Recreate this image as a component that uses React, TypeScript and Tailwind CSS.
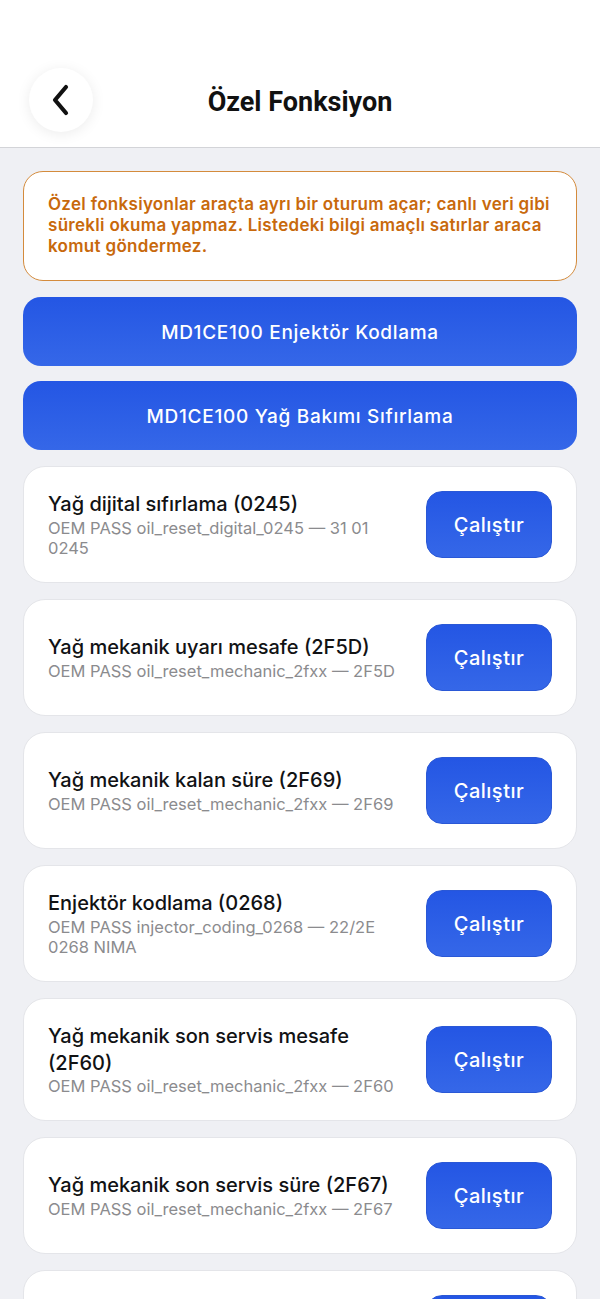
import React from "react";

type Item = { title: string; sub: string };

const items: Item[] = [
  { title: "Yağ dijital sıfırlama (0245)", sub: "OEM PASS oil_reset_digital_0245 — 31 01 0245" },
  { title: "Yağ mekanik uyarı mesafe (2F5D)", sub: "OEM PASS oil_reset_mechanic_2fxx — 2F5D" },
  { title: "Yağ mekanik kalan süre (2F69)", sub: "OEM PASS oil_reset_mechanic_2fxx — 2F69" },
  { title: "Enjektör kodlama (0268)", sub: "OEM PASS injector_coding_0268 — 22/2E 0268 NIMA" },
  { title: "Yağ mekanik son servis mesafe (2F60)", sub: "OEM PASS oil_reset_mechanic_2fxx — 2F60" },
  { title: "Yağ mekanik son servis süre (2F67)", sub: "OEM PASS oil_reset_mechanic_2fxx — 2F67" },
  { title: "Yağ mekanik son servis km (2F6A)", sub: "OEM PASS oil_reset_mechanic_2fxx — 2F6A" },
];

const FunctionCard = ({ item }: { item: Item }) => {
  return (
    <div className="flex items-center gap-6 rounded-[22px] border border-[#e4e5e9] bg-white px-6 py-6">
      <div className="flex min-w-0 flex-1 flex-col">
        <div className="text-[20px] leading-[26.5px] font-medium text-[#111214]">{item.title}</div>
        <div className="text-[16.5px] leading-[20px] text-[#8b8b8e]">{item.sub}</div>
      </div>
      <button className="flex h-[67px] w-[126px] shrink-0 items-center justify-center rounded-[16px] border border-[#2a58d6] bg-gradient-to-b from-[#2456e4] to-[#3567e8] text-[20px] font-medium tracking-[0.5px] text-white">
        Çalıştır
      </button>
    </div>
  );
};

export default function App() {
  return (
    <div className="min-h-[1299px] bg-[#eff0f4] font-['Inter',sans-serif]">
      <div className="relative flex h-[148px] items-end border-b border-[#d3d4d8] bg-white pb-[15px]">
        <div className="ml-[29px] flex h-16 w-16 items-center justify-center rounded-full bg-white shadow-[0_2px_14px_rgba(0,0,0,0.08)]">
          <svg width="22" height="34" viewBox="0 0 22 34" fill="none">
            <path d="M16 4L5 17L16 30" stroke="#111" strokeWidth="4.2" strokeLinecap="round" strokeLinejoin="round" />
          </svg>
        </div>
        <div className="absolute left-0 right-0 bottom-[28px] text-center font-['Roboto',sans-serif] text-[27px] leading-[34px] font-bold text-[#111]">
          Özel Fonksiyon
        </div>
      </div>

      <div className="flex flex-col gap-4 px-[23px] pt-[23px]">
        <div className="rounded-[20px] border-[1.5px] border-[#d48b3c] bg-white px-6 pt-[22px] pb-[23px] text-[17px] leading-[21px] font-semibold tracking-[0.3px] text-[#c8690c]">
          Özel fonksiyonlar araçta ayrı bir oturum açar; canlı veri gibi sürekli okuma yapmaz. Listedeki bilgi amaçlı satırlar araca komut göndermez.
        </div>

        <div className="flex flex-col gap-[15px]">
          <button className="h-[69px] rounded-[18px] bg-gradient-to-b from-[#2456e4] to-[#3567e8] pt-[3px] text-[19px] font-medium tracking-[0.7px] text-white">
            MD1CE100 Enjektör Kodlama
          </button>
          <button className="h-[69px] rounded-[18px] bg-gradient-to-b from-[#2456e4] to-[#3567e8] pt-[3px] text-[19px] font-medium tracking-[0.7px] text-white">
            MD1CE100 Yağ Bakımı Sıfırlama
          </button>
        </div>

        {items.map((item, index) => (
          <FunctionCard key={index} item={item} />
        ))}
      </div>
    </div>
  );
}
